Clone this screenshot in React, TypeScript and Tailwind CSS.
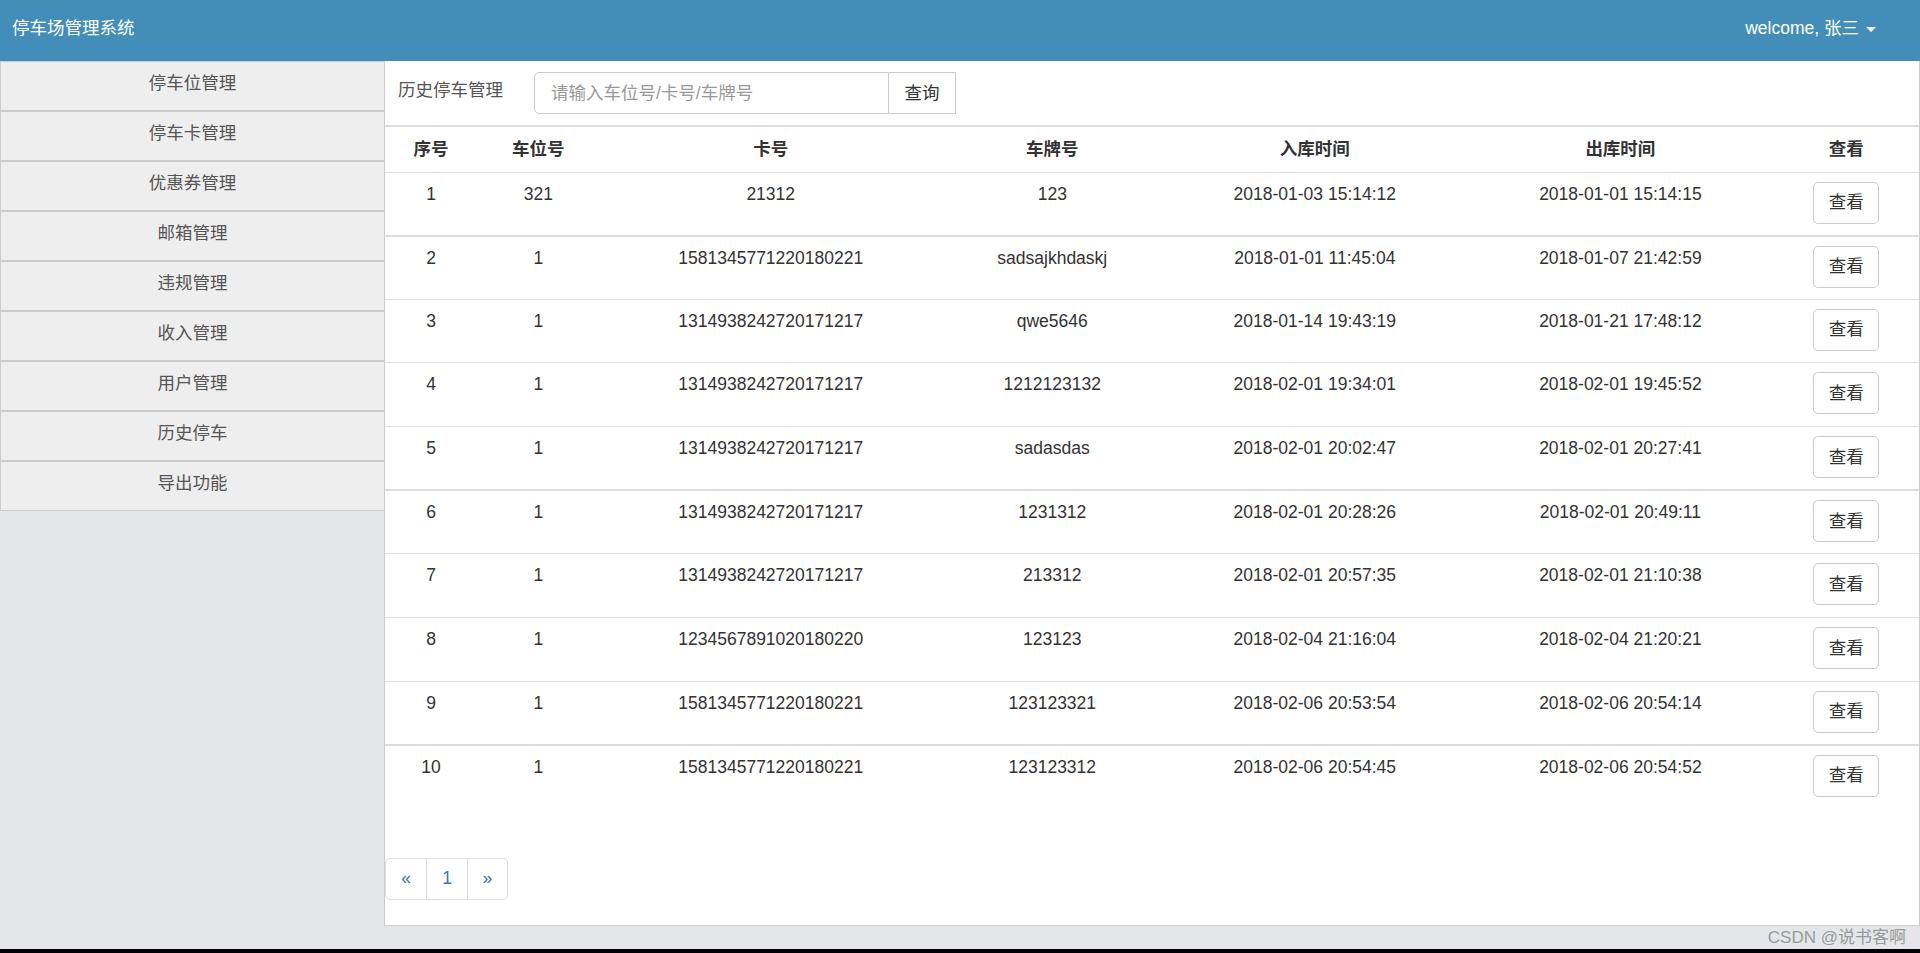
import React from 'react';

const menu = ['停车位管理', '停车卡管理', '优惠券管理', '邮箱管理', '违规管理', '收入管理', '用户管理', '历史停车', '导出功能'];

const rows = [
  ['1', '321', '21312', '123', '2018-01-03 15:14:12', '2018-01-01 15:14:15'],
  ['2', '1', '1581345771220180221', 'sadsajkhdaskj', '2018-01-01 11:45:04', '2018-01-07 21:42:59'],
  ['3', '1', '1314938242720171217', 'qwe5646', '2018-01-14 19:43:19', '2018-01-21 17:48:12'],
  ['4', '1', '1314938242720171217', '1212123132', '2018-02-01 19:34:01', '2018-02-01 19:45:52'],
  ['5', '1', '1314938242720171217', 'sadasdas', '2018-02-01 20:02:47', '2018-02-01 20:27:41'],
  ['6', '1', '1314938242720171217', '1231312', '2018-02-01 20:28:26', '2018-02-01 20:49:11'],
  ['7', '1', '1314938242720171217', '213312', '2018-02-01 20:57:35', '2018-02-01 21:10:38'],
  ['8', '1', '1234567891020180220', '123123', '2018-02-04 21:16:04', '2018-02-04 21:20:21'],
  ['9', '1', '1581345771220180221', '123123321', '2018-02-06 20:53:54', '2018-02-06 20:54:14'],
  ['10', '1', '1581345771220180221', '123123312', '2018-02-06 20:54:45', '2018-02-06 20:54:52'],
];

const heads = ['序号', '车位号', '卡号', '车牌号', '入库时间', '出库时间', '查看'];
const widths = ['w-[92px]', 'w-[122px]', 'w-[342px]', 'w-[220px]', 'w-[304px]', 'w-[306px]', 'w-[145px]'];

export default function App() {
  return (
    <div className="h-[953px] w-[1920px] overflow-hidden bg-[#e4e6e9] font-['Liberation_Sans','Noto_Sans_CJK_SC',sans-serif] text-[17.5px] leading-[25px] text-[#333]">
      {/* Navbar */}
      <div className="flex h-[61px] items-start justify-between bg-[#438eb9] pl-[12px] pr-[44px] pt-[16px] text-white">
        <span>停车场管理系统</span>
        <span className="flex items-center">
          welcome, 张三
          <span className="ml-[7px] mt-[2px] h-0 w-0 border-x-[5px] border-t-[5px] border-x-transparent border-t-white" />
        </span>
      </div>

      <div className="flex h-[865px]">
        {/* Sidebar */}
        <div className="w-[384px] shrink-0">
          {menu.map((m) => (
            <div
              key={m}
              className="flex h-[50px] items-center justify-center border-y border-l border-[#cccccc] bg-[#eeeeee] pb-[5px] text-[#555]"
            >
              {m}
            </div>
          ))}
        </div>

        {/* Content */}
        <div className="flex flex-1 flex-col border border-t-0 border-[#cccccc] bg-white">
          <div className="flex h-[64px] items-center pl-[13px]">
            <span className="mb-[6px] text-[#555]">历史停车管理</span>
            <div className="ml-[31px] flex h-[42px]">
              <div className="flex w-[355px] items-center rounded-l-[5px] border border-[#cccccc] pl-[16px] text-[#999]">
                请输入车位号/卡号/车牌号
              </div>
              <div className="flex w-[67px] items-center justify-center border border-l-0 border-[#cccccc] bg-white text-[#333]">
                查询
              </div>
            </div>
          </div>

          <table className="w-full table-fixed border-collapse">
            <thead>
              <tr className="h-[46px] border-t-2 border-[#dddddd]">
                {heads.map((h, i) => (
                  <th key={h} className={`${widths[i]} border-b border-[#dddddd] text-center font-bold`}>
                    {h}
                  </th>
                ))}
              </tr>
            </thead>
            <tbody>
              {rows.map((r, i) => (
                <tr
                  key={r[0]}
                  className={`h-[63.67px] ${i === 9 ? '' : i % 4 === 0 ? 'border-b-2' : 'border-b'} border-[#dddddd]`}
                >
                  {r.map((c, j) => (
                    <td key={j} className="pt-[9px] text-center align-top">
                      {c}
                    </td>
                  ))}
                  <td className="pt-[9px] text-center align-top">
                    <button className="h-[42px] w-[66px] rounded-[5px] border border-[#cccccc] bg-white text-[#333]">
                      查看
                    </button>
                  </td>
                </tr>
              ))}
            </tbody>
          </table>

          {/* Pagination */}
          <div className="mt-[49px] flex h-[42px] w-[123px] overflow-hidden rounded-[5px] border border-[#dddddd] text-[#337ab7]">
            <span className="flex w-[41px] items-center justify-center">«</span>
            <span className="flex w-[41px] items-center justify-center border-l border-[#dddddd]">1</span>
            <span className="flex w-[41px] items-center justify-center border-l border-[#dddddd]">»</span>
          </div>
        </div>
      </div>

      <div className="flex h-[23px] items-center justify-end pr-[14px] text-[17px] text-[#9a9a9a]">
        CSDN @说书客啊
      </div>
      <div className="h-[4px] bg-black" />
    </div>
  );
}
